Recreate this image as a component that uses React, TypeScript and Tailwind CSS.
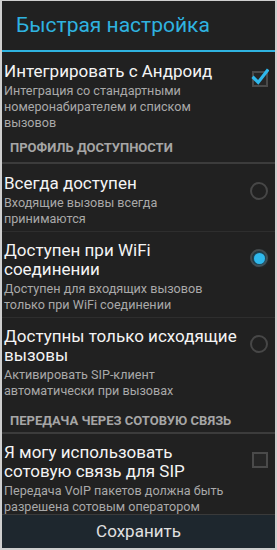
import React from 'react';

type Pref = {
  title: string[];
  summary: string[];
  kind: 'check' | 'radio';
  on: boolean;
  divider?: boolean;
  top?: string;
};

const FONT = { fontFamily: 'Roboto, "Noto Sans", sans-serif' };

function Widget({ kind, on }: { kind: 'check' | 'radio'; on: boolean }) {
  if (kind === 'radio') {
    return (
      <div className="mt-[8px] flex h-[18px] w-[18px] shrink-0 items-center justify-center rounded-full border-2 border-[#474747]">
        {on && <div className="h-[11px] w-[11px] rounded-full bg-[#2fb8ec] shadow-[0_0_4px_#1b8fc0]" />}
      </div>
    );
  }
  return (
    <div className="relative mt-[9px] h-[16px] w-[16px] shrink-0 border-2 border-[#4a4a4a] bg-[#262626]">
      {on && (
        <svg viewBox="0 0 20 20" className="absolute -right-[3px] -top-[5px] h-[18px] w-[18px]">
          <path d="M3 11 L8 16 L18 3" fill="none" stroke="#2fb8ec" strokeWidth="3.6" strokeLinecap="square" />
        </svg>
      )}
    </div>
  );
}

function Item({ p }: { p: Pref }) {
  return (
    <div className={p.divider ? 'border-b border-[#2e2e2e]' : ''}>
      <div className={`flex items-start pl-[2px] pr-[7px] pb-[4px] ${p.top ?? 'pt-[9px]'}`}>
        <div className="flex-1">
          {p.title.map((t) => (
            <div key={t} className="whitespace-nowrap text-[17px] leading-[19px] text-[#f4f4f4]">
              {t}
            </div>
          ))}
          <div className="mt-[2px]">
            {p.summary.map((t) => (
              <div key={t} className="whitespace-nowrap text-[12.6px] leading-[16px] text-[#a9a9a9]">
                {t}
              </div>
            ))}
          </div>
        </div>
        <Widget kind={p.kind} on={p.on} />
      </div>
    </div>
  );
}

function Section({ label, pad }: { label: string; pad: string }) {
  return (
    <div className={`border-b-2 border-[#3c3c3c] px-[8px] ${pad}`}>
      <div className="text-[13px] font-bold leading-[16px] text-[#a6a6a6]">{label}</div>
    </div>
  );
}

export default function App() {
  return (
    <div style={FONT} className="flex h-[550px] w-[277px] flex-col overflow-hidden border-2 border-t border-[#cfcfcf] bg-[#212121]">
      <div className="flex h-[49px] items-center px-[14px] text-[21px] text-[#2fb3e0]">Быстрая настройка</div>
      <div className="h-[2px] bg-[#2fb3e0]" />
      <div className="flex-1 overflow-hidden">
        <Item p={{ title: ['Интегрировать с Андроид'], summary: ['Интеграция со стандартными', 'номеронабирателем и списком', 'вызовов'], kind: 'check', on: true, top: 'pt-[10px]' }} />
        <Section label="ПРОФИЛЬ ДОСТУПНОСТИ" pad="pt-[5px] pb-[6px]" />
        <Item p={{ title: ['Всегда доступен'], summary: ['Входящие вызовы всегда', 'принимаются'], kind: 'radio', on: false, divider: true, top: 'pt-[10px]' }} />
        <Item p={{ title: ['Доступен при WiFi', 'соединении'], summary: ['Доступен для входящих вызовов', 'только при WiFi соединении'], kind: 'radio', on: true, divider: true }} />
        <Item p={{ title: ['Доступны только исходящие', 'вызовы'], summary: ['Активировать SIP-клиент', 'автоматически при вызовах'], kind: 'radio', on: false }} />
        <Section label="ПЕРЕДАЧА ЧЕРЕЗ СОТОВУЮ СВЯЗЬ" pad="pt-[10px] pb-[3px]" />
        <Item p={{ title: ['Я могу использовать', 'сотовую связь для SIP'], summary: ['Передача VoIP пакетов должна быть', 'разрешена сотовым оператором'], kind: 'check', on: false }} />
      </div>
      <div className="flex h-[34px] shrink-0 items-center justify-center border-t border-[#3a3a3a] bg-[#1e272e] text-[17px] text-[#e0e0e0]">
        Сохранить
      </div>
    </div>
  );
}
